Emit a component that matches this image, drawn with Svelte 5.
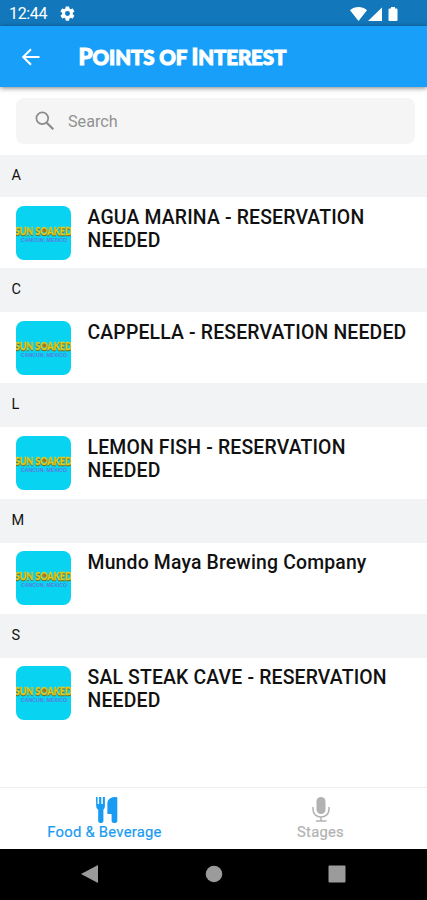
<script>
    const groups = [
        { letter: 'A', name: 'AGUA MARINA - RESERVATION NEEDED' },
        { letter: 'C', name: 'CAPPELLA - RESERVATION NEEDED' },
        { letter: 'L', name: 'LEMON FISH - RESERVATION NEEDED' },
        { letter: 'M', name: 'Mundo Maya Brewing Company' },
        { letter: 'S', name: 'SAL STEAK CAVE - RESERVATION NEEDED' }
    ];

    let query = $state('');
    let tab = $state('food');

    let visible = $derived(groups.filter(g => g.name.toLowerCase().includes(query.toLowerCase())));
</script>

<div class="screen">
    <div class="status">
        <span class="time">12:44</span>
        <svg class="gear" viewBox="0 0 24 24" width="17" height="17">
            <path fill="#fff" fill-rule="evenodd" d="M19.4 13c0-.3.1-.6.1-1s0-.7-.1-1l2.1-1.6c.2-.2.2-.4.1-.6l-2-3.500c-.1-.2-.4-.3-.6-.2l-2.500 1c-.5-.4-1.100-.7-1.700-1l-.4-2.600c0-.3-.2-.5-.5-.5h-4c-.2 0-.4.2-.5.4l-.4 2.700c-.6.2-1.100.6-1.700 1l-2.500-1c-.2-.1-.5 0-.6.2l-2 3.500c-.1.2-.1.500.1.600l2.200 1.600c-.1.300-.1.700-.1 1s0 .7.1 1l-2.200 1.700c-.2.100-.2.400-.1.600l2 3.400c.1.300.4.300.6.300l2.500-1c.5.400 1.100.700 1.700 1l.4 2.600c.1.300.3.500.5.500h4c.3 0 .5-.2.5-.5l.4-2.600c.6-.3 1.200-.6 1.700-1l2.500 1c.2 0 .5 0 .6-.3l2-3.400c.1-.2.1-.5-.1-.6zM12 15.500a3.500 3.500 0 1 1 0-7 3.500 3.500 0 0 1 0 7z" />
        </svg>
        <svg class="signals" viewBox="0 0 50 16" width="50" height="16">
            <path fill="#fff" d="M0 4.200C5-.2 12-.2 17 4.200L8.500 15zM18 15L32 1.500V15zM39.500 2.500h1.500V1h4v1.500h1.500q1 0 1 1V14q0 1-1 1h-7q-1 0-1-1V3.500q0-1 1-1z" />
        </svg>
    </div>

    <header>
        <button class="back" aria-label="Back">
            <svg viewBox="0 0 18 18" width="18" height="18">
                <path d="M17.500 9H1.500M9 1.200L1.200 9L9 16.800" fill="none" stroke="#fff" stroke-width="2" />
            </svg>
        </button>
        <h1><span>P</span>OINTS OF <span>I</span>NTEREST</h1>
    </header>

    <div class="search">
        <svg viewBox="0 0 20 20" width="20" height="20">
            <circle cx="7.300" cy="7.300" r="5.900" fill="none" stroke="#8b8b8b" stroke-width="1.700" />
            <path d="M11.700 11.700L18.300 18.300" stroke="#8b8b8b" stroke-width="2.200" />
        </svg>
        <input type="text" placeholder="Search" bind:value={query} />
    </div>

    <main>
        {#each visible as group (group.letter)}
            <div class="letter">{group.letter}</div>
            <div class="row">
                <svg class="thumb" viewBox="0 0 55 54" width="55" height="54">
                    <rect width="55" height="54" fill="#08d3f0" />
                    <text class="logo" x="-1" y="29" textLength="57" lengthAdjust="spacingAndGlyphs">SUN SOAKED</text>
                    <circle cx="28.500" cy="24.500" r="2" fill="#a87a20" />
                    <text class="place" x="5" y="35.500" textLength="46" lengthAdjust="spacingAndGlyphs">CANCUN, MEXICO</text>
                </svg>
                <div class="name">{group.name}</div>
            </div>
        {/each}
    </main>

    <nav class="tabs">
        <button class:active={tab === 'food'} onclick={() => (tab = 'food')}>
            <svg class="cutlery" viewBox="0 0 22 26" width="22" height="26">
                <path fill="currentColor" d="M0 0h1.600v7h1.500V0h2.200v7h1.500V0h2.100v9c0 2-.7 3-1.500 3.700V24c0 2.700-5.200 2.700-5.200 0V12.700C1 12 .3 11 .2 9zM21.300 1v23c0 2.700-5.700 2.700-5.700 0v-7h-4.200V5c1-3.300 4-5 7.900-5 1.300 0 2 .3 2 1z" />
            </svg>
            <span>Food &amp; Beverage</span>
        </button>
        <button class:active={tab === 'stages'} onclick={() => (tab = 'stages')}>
            <svg viewBox="0 0 18 26" width="18" height="26">
                <rect x="4.500" y="0" width="9" height="17" rx="4.500" fill="currentColor" />
                <path d="M1 10v2.500c0 10 16 10 16 0V10M9 20v3.500M4 24h10.500" fill="none" stroke="currentColor" stroke-width="1.500" />
            </svg>
            <span>Stages</span>
        </button>
    </nav>

    <div class="system">
        <svg viewBox="0 0 18 18" width="18" height="18"><path d="M17 0v18L0 9z" fill="#9b9b9b" /></svg>
        <svg viewBox="0 0 18 18" width="18" height="18"><circle cx="9" cy="9" r="8.300" fill="#9b9b9b" /></svg>
        <svg viewBox="0 0 18 18" width="18" height="18"><rect x="0.500" y="0.500" width="17" height="17" rx="1" fill="#9b9b9b" /></svg>
    </div>
</div>

<style>
    :global(body) {
        margin: 0;
    }

    .screen {
        display: flex;
        flex-direction: column;
        width: 427px;
        height: 900px;
        overflow: hidden;
        background: #fff;
        font-family: Roboto, sans-serif;
        color: #111;
    }

    button {
        padding: 0;
        border: none;
        background: none;
        font-family: inherit;
    }

    svg {
        display: block;
        flex: none;
    }

    .status {
        display: flex;
        align-items: center;
        flex: none;
        height: 26px;
        padding: 1px 27px 0 9px;
        box-sizing: border-box;
        background: #1278bb;
        color: #fff;
    }

    .time {
        width: 50px;
        font-size: 16px;
        letter-spacing: -0.35px;
    }

    .signals {
        margin-left: auto;
    }

    header {
        display: flex;
        align-items: center;
        flex: none;
        height: 61px;
        padding-left: 22px;
        background: #189ff9;
        box-shadow: 0 1px 5px rgba(0, 0, 0, 0.5);
    }

    .back {
        width: 56.5px;
    }

    h1 {
        margin: 0;
        font-family: Lato, sans-serif;
        font-size: 20.5px;
        font-weight: 900;
        line-height: 24px;
        letter-spacing: -0.1px;
        white-space: nowrap;
        color: #fff;
        -webkit-text-stroke: 1px #fff;
    }

    h1 span {
        font-size: 22.5px;
    }

    .search {
        display: flex;
        align-items: center;
        flex: none;
        height: 46px;
        margin: 11px 12px 11px 16px;
        padding-left: 19px;
        box-sizing: border-box;
        border-radius: 8px;
        background: #f5f5f5;
    }

    .search input {
        width: 300px;
        margin-left: 13px;
        padding: 0;
        border: none;
        outline: none;
        background: none;
        font: 16.2px Roboto, sans-serif;
    }

    .search input::placeholder {
        color: #929292;
        opacity: 1;
    }

    main {
        flex: 1;
        min-height: 0;
    }

    .letter {
        height: 44px;
        padding-left: 11.5px;
        background: #f1f3f4;
        font-size: 14.5px;
        line-height: 43px;
    }

    .letter:first-child {
        height: 42px;
        line-height: 41px;
    }

    .row {
        display: flex;
        height: 71.2px;
        padding: 8.5px 16px 0;
        box-sizing: border-box;
    }

    .thumb {
        border-radius: 8px;
        overflow: hidden;
    }

    .logo {
        font: 900 12px Lato, sans-serif;
        fill: #e8c817;
        stroke: #e8c817;
        stroke-width: 0.3px;
        filter: drop-shadow(0 1.3px 0 #6e661c);
    }

    .place {
        font: 700 5px "Liberation Sans", sans-serif;
        fill: #5a7be2;
    }

    .name {
        width: 330px;
        margin-left: 16.5px;
        margin-right: -10px;
        font-size: 19.4px;
        font-weight: 500;
        line-height: 23px;
        letter-spacing: 0.17px;
    }

    .tabs {
        display: flex;
        flex: none;
        height: 62px;
        border-top: 1px solid #ededed;
        box-sizing: border-box;
    }

    .tabs button {
        display: flex;
        flex-direction: column;
        align-items: center;
        width: 213px;
        padding: 9px 4px 0 0;
        color: #b2b2b2;
    }

    .tabs button:last-child {
        padding: 9px 0 0 2px;
    }

    .tabs button.active {
        color: #189bf2;
    }

    .cutlery {
        margin-left: 5px;
    }

    .tabs span {
        font-size: 14.8px;
        line-height: 18px;
        letter-spacing: 0.25px;
        white-space: nowrap;
        -webkit-text-stroke: 0.2px currentColor;
    }

    .system {
        display: flex;
        flex: none;
        gap: 105.5px;
        height: 51px;
        padding: 16px 0 0 81px;
        box-sizing: border-box;
        background: #000;
    }
</style>
